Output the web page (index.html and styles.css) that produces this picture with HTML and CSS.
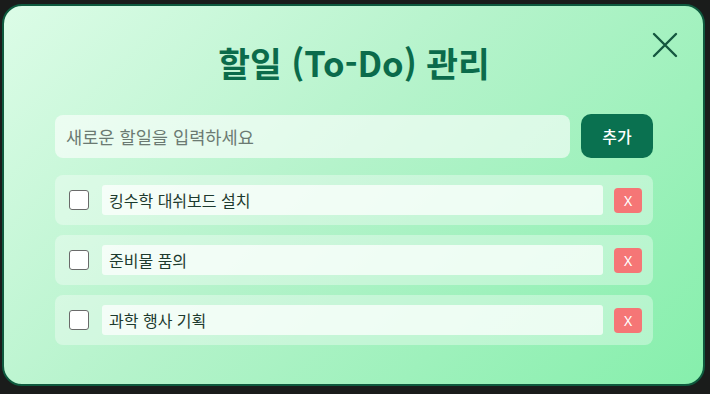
FILE: index.html
```html
<!DOCTYPE html>
<html lang="ko">
<head>
<meta charset="utf-8">
<title>할일 (To-Do) 관리</title>
<link rel="stylesheet" href="styles.css">
</head>
<body>
<div class="modal">
  <button class="close" aria-label="닫기">
    <svg width="26" height="26" viewBox="0 0 26 26"><path d="M2 2 L24 24 M24 2 L2 24" stroke="#14573f" stroke-width="2.4" stroke-linecap="round" fill="none"/></svg>
  </button>
  <h1 class="title">할일 (To-Do) 관리</h1>
  <div class="add-row">
    <input class="new-input" type="text" placeholder="새로운 할일을 입력하세요">
    <button class="add-btn">추가</button>
  </div>
  <ul class="list">
    <li class="item">
      <span class="check"></span>
      <input class="item-text" type="text" value="킹수학 대쉬보드 설치">
      <button class="del">X</button>
    </li>
    <li class="item">
      <span class="check"></span>
      <input class="item-text" type="text" value="준비물 품의">
      <button class="del">X</button>
    </li>
    <li class="item">
      <span class="check"></span>
      <input class="item-text" type="text" value="과학 행사 기획">
      <button class="del">X</button>
    </li>
  </ul>
</div>
</body>
</html>
```
FILE: styles.css
```css
* { box-sizing: border-box; }
html, body { margin: 0; padding: 0; }
body {
  background: #1a1c1b;
  width: 710px;
  height: 394px;
  font-family: "Noto Sans CJK KR", "Noto Sans", sans-serif;
  padding: 4px 5px 0 2px;
}
.modal {
  position: relative;
  width: 703px;
  height: 382px;
  border: 2px solid #0e5a3e;
  border-radius: 20px;
  background: linear-gradient(135deg, #dcfce7 0%, #b5f3cb 45%, #86efac 100%);
  padding: 34px 50px 0 51px;
}
.close {
  position: absolute;
  top: 26px;
  right: 25px;
  width: 26px;
  height: 26px;
  padding: 0;
  border: 0;
  background: none;
  display: flex;
}
.title {
  margin: 0;
  text-align: center;
  font-size: 34.5px;
  line-height: 44px;
  font-weight: 700;
  color: #0b6b4b;
}
.add-row {
  margin-top: 30px;
  display: flex;
  align-items: center;
  gap: 11px;
}
.new-input {
  flex: 1;
  height: 43px;
  border: 0;
  border-radius: 8px;
  background: rgba(255,255,255,0.6);
  padding: 0 11px;
  font-family: inherit;
  font-size: 17.6px;
  color: #1f3b30;
  outline: none;
}
.new-input::placeholder { color: #6b7a72; }
.add-btn {
  width: 72px;
  height: 44px;
  border: 0;
  border-radius: 10px;
  background: #0a7150;
  color: #fff;
  font-family: inherit;
  font-size: 16px;
  font-weight: 500;
}
.list {
  list-style: none;
  margin: 17px 0 0;
  padding: 0;
  display: flex;
  flex-direction: column;
  gap: 10px;
}
.item {
  height: 50px;
  border-radius: 8px;
  background: rgba(255,255,255,0.35);
  display: flex;
  align-items: center;
  padding: 0 11px 0 14px;
}
.check {
  width: 20px;
  height: 20px;
  border: 1.5px solid #6a6a6a;
  border-radius: 3px;
  background: #fff;
  flex: none;
}
.item-text {
  margin-left: 13px;
  flex: 1;
  height: 30px;
  border: 0;
  border-radius: 3px;
  background: rgba(255,255,255,0.72);
  padding: 0 7px;
  font-family: inherit;
  font-size: 16px;
  color: #1d3a2e;
  outline: none;
}
.del {
  margin-left: 11px;
  width: 28px;
  height: 25px;
  border: 0;
  border-radius: 4px;
  background: #f57676;
  color: #fff;
  font-family: "Noto Sans", sans-serif;
  font-size: 14px;
  padding: 0;
}
```
